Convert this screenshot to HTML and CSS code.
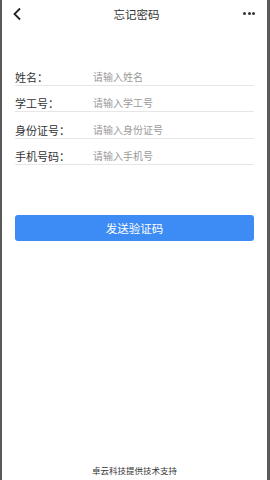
FILE: index.html
```html
<!DOCTYPE html>
<html lang="zh">
<head>
    <meta charset="UTF-8">
    <meta name="viewport" content="width=device-width, initial-scale=1.0">
    <title>忘记密码</title>
    <link rel="stylesheet" href="styles.css">
</head>
<body>
    <div class="page">
        <div class="header">
            <svg class="back" width="10" height="14" viewBox="0 0 10 14">
                <path d="M8 1.5 L2.5 7 L8 12.5" fill="none" stroke="#222" stroke-width="1.8"/>
            </svg>
            <div class="title">忘记密码</div>
            <div class="more"><span></span><span></span><span></span></div>
        </div>

        <div class="form">
            <div class="row">
                <div class="label">姓名：</div>
                <div class="input">请输入姓名</div>
            </div>
            <div class="row">
                <div class="label">学工号：</div>
                <div class="input">请输入学工号</div>
            </div>
            <div class="row">
                <div class="label">身份证号：</div>
                <div class="input">请输入身份证号</div>
            </div>
            <div class="row">
                <div class="label">手机号码：</div>
                <div class="input">请输入手机号</div>
            </div>
        </div>

        <button class="send-btn">发送验证码</button>

        <div class="footer">卓云科技提供技术支持</div>
    </div>
</body>
</html>
```

FILE: styles.css
```css
html, body {
    margin: 0;
    padding: 0;
    height: 100%;
}

body {
    font-family: "Noto Sans CJK SC", "Noto Sans", sans-serif;
    background: #fff;
    color: #333;
}

.page {
    height: 480px;
    box-sizing: border-box;
    border-left: 2px solid #5a5a5a;
    border-right: 3px solid #5a5a5a;
    display: flex;
    flex-direction: column;
}

.header {
    height: 27px;
    display: flex;
    align-items: center;
    justify-content: space-between;
    padding: 0 10px 0 10px;
}

.back {
    display: block;
}

.title {
    font-size: 11.5px;
    color: #333;
    margin-left: 8px;
}

.more {
    display: flex;
    gap: 1.5px;
    padding-right: 2px;
}

.more span {
    width: 3px;
    height: 3px;
    border-radius: 50%;
    background: #333;
}

.form {
    margin-top: 32px;
    padding: 0 13px;
}

.row {
    height: 26.5px;
    display: flex;
    align-items: flex-end;
    padding-bottom: 2px;
    line-height: 12px;
    border-bottom: 1px solid #e6e6e6;
    box-sizing: border-box;
}

.label {
    width: 78px;
    font-size: 11px;
    color: #333;
}

.input {
    font-size: 10px;
    color: #9a9a9a;
}

.send-btn {
    margin: 50px 13px 0;
    height: 26px;
    border: none;
    border-radius: 3px;
    background: #3d8bf5;
    color: #fff;
    font-family: "Noto Sans CJK SC", sans-serif;
    font-size: 11.5px;
}

.footer {
    margin-top: auto;
    margin-bottom: 4px;
    text-align: center;
    font-size: 8.5px;
    color: #333;
}
```
